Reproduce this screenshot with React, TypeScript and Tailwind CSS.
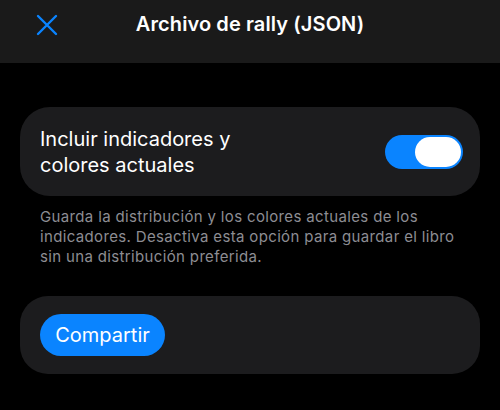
import { useState } from "react";

const XIcon = () => (
  <svg width="22" height="22" viewBox="0 0 22 22" fill="none">
    <path
      d="M2 2L20 20M20 2L2 20"
      stroke="#0a84ff"
      strokeWidth="2.4"
      strokeLinecap="round"
    />
  </svg>
);

const Toggle = ({ on, onChange }: { on: boolean; onChange: () => void }) => (
  <button
    onClick={onChange}
    className={`flex h-[34px] w-[78px] shrink-0 items-center rounded-full p-[2px] transition-colors ${
      on ? "justify-end bg-[#0a84ff]" : "justify-start bg-[#39393d]"
    }`}
  >
    <span className="h-[30px] w-[46px] rounded-full bg-white" />
  </button>
);

const App = () => {
  const [include, setInclude] = useState(true);

  return (
    <div
      className="min-h-[410px] w-full bg-black text-white"
      style={{ fontFamily: "Inter, 'Noto Sans', sans-serif" }}
    >
      <header className="h-[63px] bg-[#1a1a1a]">
        <div className="grid h-[48px] grid-cols-[1fr_auto_1fr] items-center">
          <div className="pl-[36px] pt-[1px]">
            <XIcon />
          </div>
          <h1 className="text-[20px] font-semibold tracking-[0.1px]">
            Archivo de rally (JSON)
          </h1>
          <div />
        </div>
      </header>

      <main className="px-[20px] pt-[44px]">
        <section className="flex h-[89px] items-center justify-between rounded-[30px] bg-[#1c1c1e] pl-[20px] pr-[17px]">
          <p className="text-[20px] leading-[26px]">
            Incluir indicadores y
            <br />
            colores actuales
          </p>
          <Toggle on={include} onChange={() => setInclude(!include)} />
        </section>

        <p className="mt-[11px] px-[20px] text-[15px] leading-[20px] tracking-[0.35px] text-[#8d8d93]">
          Guarda la distribución y los colores actuales de los indicadores.
          Desactiva esta opción para guardar el libro sin una distribución
          preferida.
        </p>

        <section className="mt-[29px] flex h-[78px] items-center rounded-[28px] bg-[#1c1c1e] px-[20px]">
          <button className="flex h-[42px] w-[125px] items-center justify-center rounded-full bg-[#0a84ff] text-[20px]">
            Compartir
          </button>
        </section>
      </main>
    </div>
  );
};

export default App;
